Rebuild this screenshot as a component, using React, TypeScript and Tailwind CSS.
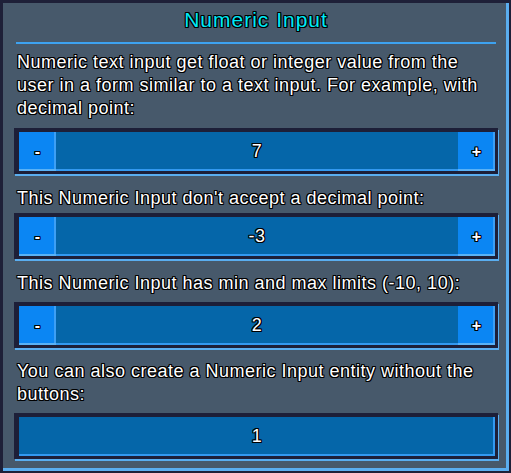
import { ReactNode } from 'react';

const outline =
  '[text-shadow:1px_1px_0_#000,-1px_-1px_0_#000,1px_-1px_0_#000,-1px_1px_0_#000,0_1px_0_#000,1px_0_0_#000,-1px_0_0_#000,0_-1px_0_#000]';

function Label({ children }: { children: ReactNode }) {
  return (
    <p className={`ml-[3px] text-[18px] leading-[23px] tracking-[0.5px] text-white ${outline}`}>
      {children}
    </p>
  );
}

function StepButton({ sign }: { sign: string }) {
  return (
    <div
      className={`flex w-[37px] items-center justify-center bg-[#0b86f3] text-[16px] font-bold text-white shadow-[inset_0_-2px_0_#5ab2f6,inset_-2px_0_0_#3d9ff5] ${outline}`}
    >
      {sign}
    </div>
  );
}

function NumericInput({ value, buttons = true }: { value: string; buttons?: boolean }) {
  return (
    <div className="h-[46px] border-t-[4px] border-l-[5px] border-r-[3px] border-b-[3px] border-[#1d1f38] shadow-[1px_2px_0_#5aaef0]">
      <div className="flex h-full bg-[#0566a9] shadow-[inset_0_-2px_0_#3399f0,inset_-2px_0_0_#3399f0]">
        {buttons && <StepButton sign="-" />}
        <div className={`flex flex-1 items-center justify-center text-[18px] tracking-[0.5px] text-white ${outline}`}>
          {value}
        </div>
        {buttons && <StepButton sign="+" />}
      </div>
    </div>
  );
}

export default function App() {
  return (
    <div className="h-[473px] w-[511px] font-['Liberation_Sans',Arial,sans-serif]">
      <div className="h-full border-t-[3px] border-l-[3px] border-r-[2px] border-b-[2px] border-[#1e2038] bg-[#47596b] shadow-[inset_-3px_-3px_0_#5aaef0]">
        <h1
          className={`pt-[4px] text-center text-[21px] leading-[26px] tracking-[1px] text-[#00e8f5] ${outline}`}
        >
          Numeric Input
        </h1>
        <div className="mx-[13px] mt-[9px] h-[2px] bg-[#3da2f0]" />
        <div className="px-[11px] pt-[7px]">
          <Label>
            Numeric text input get float or integer value from the user in a form similar to a text input. For example, with decimal point:
          </Label>
          <div className="mt-[8px]">
            <NumericInput value="7" />
          </div>
          <div className="mt-[13px]">
            <Label>This Numeric Input don't accept a decimal point:</Label>
          </div>
          <div className="mt-[3px]">
            <NumericInput value="-3" />
          </div>
          <div className="mt-[13px]">
            <Label>This Numeric Input has min and max limits (-10, 10):</Label>
          </div>
          <div className="mt-[7px]">
            <NumericInput value="2" />
          </div>
          <div className="mt-[12px]">
            <Label>You can also create a Numeric Input entity without the buttons:</Label>
          </div>
          <div className="mt-[7px]">
            <NumericInput value="1" buttons={false} />
          </div>
        </div>
      </div>
    </div>
  );
}
